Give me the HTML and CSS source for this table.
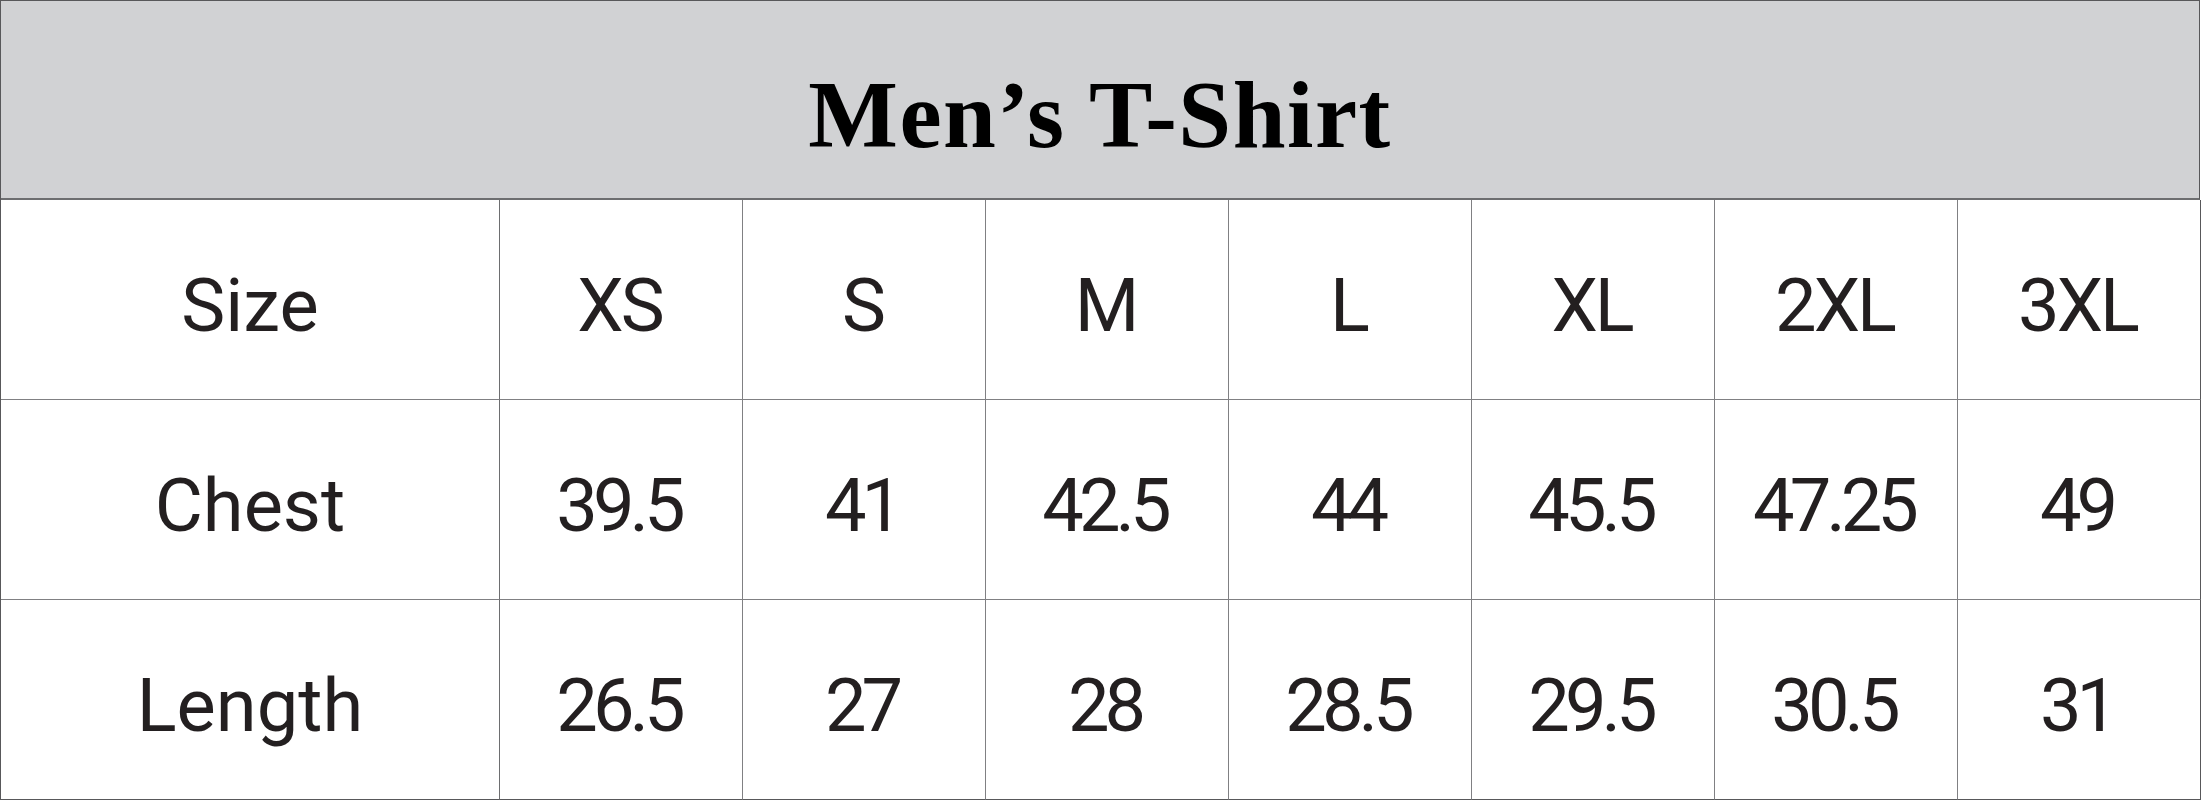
FILE: index.html
```html
<!DOCTYPE html>
<html>
<head>
<meta charset="utf-8">
<link rel="stylesheet" href="styles.css">
</head>
<body>
<div class="chart">
  <div class="title">Men’s T-Shirt</div>
  <div class="grid">
    <div class="cell label">Size</div>
    <div class="cell size">XS</div>
    <div class="cell size">S</div>
    <div class="cell size">M</div>
    <div class="cell size">L</div>
    <div class="cell size">XL</div>
    <div class="cell size">2XL</div>
    <div class="cell size last">3XL</div>

    <div class="cell label">Chest</div>
    <div class="cell num">39.5</div>
    <div class="cell num">41</div>
    <div class="cell num">42.5</div>
    <div class="cell num">44</div>
    <div class="cell num">45.5</div>
    <div class="cell num">47.25</div>
    <div class="cell num last">49</div>

    <div class="cell label bottom">Length</div>
    <div class="cell num bottom">26.5</div>
    <div class="cell num bottom">27</div>
    <div class="cell num bottom">28</div>
    <div class="cell num bottom">28.5</div>
    <div class="cell num bottom">29.5</div>
    <div class="cell num bottom">30.5</div>
    <div class="cell num last bottom">31</div>
  </div>
</div>
</body>
</html>
```
FILE: styles.css
```css
html, body {
  margin: 0;
  padding: 0;
  background: #ffffff;
}
.chart {
  width: 2200px;
  height: 800px;
  border-top: 1px solid #58585a;
  border-left: 1px solid #58585a;
  box-sizing: border-box;
  display: flex;
  flex-direction: column;
}
.title {
  height: 199px;
  flex: none;
  background: #d1d2d4;
  border-bottom: 2px solid #6d6e70;
  border-right: 1px solid #58585a;
  box-sizing: border-box;
  display: flex;
  align-items: center;
  justify-content: center;
  padding-top: 30px;
  font-family: "Liberation Serif", "Times New Roman", serif;
  font-weight: bold;
  font-size: 95px;
  color: #000000;
  letter-spacing: 1.5px;
}
.grid {
  display: grid;
  grid-template-columns: 499px repeat(7, 243px);
  grid-template-rows: repeat(3, 200px);
}
.cell {
  border-right: 1px solid #808083;
  border-bottom: 1px solid #808083;
  box-sizing: border-box;
  display: flex;
  align-items: center;
  justify-content: center;
  padding-top: 12px;
  font-family: Roboto, "Liberation Sans", sans-serif;
  font-size: 74px;
  color: #231f20;
}
.label {
  border-right-color: #6d6e70;
}
.size {
  letter-spacing: -3px;
  padding-right: 3px;
}
.num {
  letter-spacing: -5px;
  padding-right: 5px;
}
.last {
  border-right: 1px solid #58585a;
}
.bottom {
  border-bottom: 1px solid #58585a;
}
```
